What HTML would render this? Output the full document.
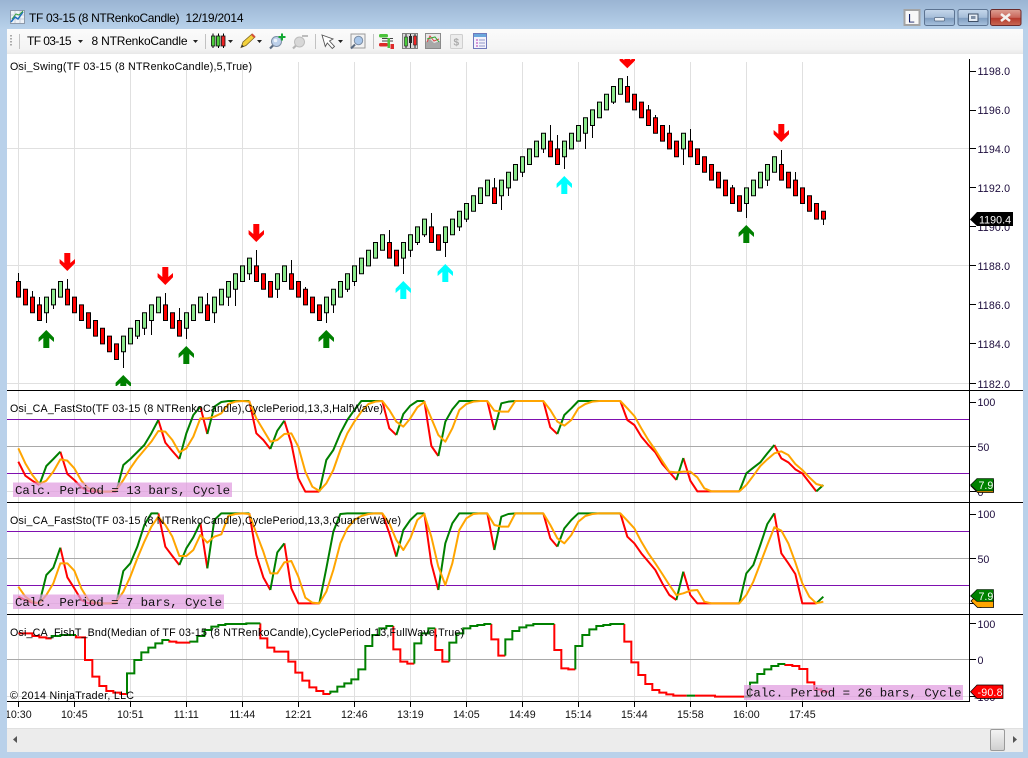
<!DOCTYPE html>
<html><head><meta charset="utf-8"><title>TF 03-15</title>
<style>
html,body{margin:0;padding:0;background:#b9d1ea;width:1028px;height:758px;overflow:hidden}
svg{display:block;position:absolute;left:0;top:0}
text{font-family:"Liberation Sans",sans-serif;font-size:10.67px;fill:#000}
.p{fill:#1c0c3c}
.t{fill:#111;text-anchor:middle}
.m{font-family:"Liberation Mono",monospace;font-size:12.4px;fill:#111}
.w{fill:#fff}
</style></head><body>
<svg width="1028" height="758" viewBox="0 0 1028 758">
<defs>
<linearGradient id="tb" x1="0" y1="0" x2="0" y2="1"><stop offset="0" stop-color="#9ab4d3"/><stop offset="1" stop-color="#b8d1ea"/></linearGradient>
<linearGradient id="tool" x1="0" y1="0" x2="0" y2="1"><stop offset="0" stop-color="#fbfbfb"/><stop offset=".8" stop-color="#f4f4f4"/><stop offset="1" stop-color="#e8e8e8"/></linearGradient>
<linearGradient id="btn" x1="0" y1="0" x2="0" y2="1"><stop offset="0" stop-color="#c6d8ec"/><stop offset=".5" stop-color="#a5bdd8"/><stop offset=".55" stop-color="#7f9dc0"/><stop offset="1" stop-color="#a9c3de"/></linearGradient>
<linearGradient id="cl" x1="0" y1="0" x2="0" y2="1"><stop offset="0" stop-color="#dda093"/><stop offset=".5" stop-color="#c9665a"/><stop offset=".55" stop-color="#b63a2c"/><stop offset="1" stop-color="#c86a54"/></linearGradient>
<linearGradient id="th" x1="0" y1="0" x2="0" y2="1"><stop offset="0" stop-color="#f4f4f4"/><stop offset="1" stop-color="#cfcfcf"/></linearGradient>
<clipPath id="c1"><rect x="7" y="59" width="962" height="327"/></clipPath>
</defs>
<rect width="1028" height="758" fill="#b9d1ea"/>
<rect width="1028" height="29" fill="url(#tb)"/>
<rect x="7" y="29" width="1016" height="25" fill="url(#tool)"/>
<rect x="7" y="54" width="1016" height="674" fill="#fff"/>
<rect x="7" y="728" width="1016" height="24" fill="#ececec"/>
<rect x="7" y="728" width="1016" height="1" fill="#e0e0e0"/>

<!-- grid -->
<path d="M18.5 62V701M74.5 62V701M130.5 62V701M186.5 62V701M242.5 62V701M298.5 62V701M354.5 62V701M410.5 62V701M466.5 62V701M522.5 62V701M578.5 62V701M634.5 62V701M690.5 62V701M746.5 62V701M802.5 62V701" stroke="#e0e0e0" fill="none"/>
<path d="M7 148.5H969M7 265.5H969M7 383.5H969M7 491.5H969M7 603.5H969M7 696.5H969" stroke="#e0e0e0" fill="none"/>
<path d="M7 419.5H969M7 473.5H969M7 531.5H969M7 585.5H969" stroke="#7f10b0" fill="none"/>
<path d="M7 446.5H969M7 558.5H969M7 659.5H969" stroke="#a9a9a9" fill="none"/>

<!-- wicks -->
<path d="M18.5 273V281M32.5 291V297M39.5 297V305M46.5 312V323M53.5 304V309M67.5 279V289M123.5 351V368M137.5 335V339M144.5 328V335M151.5 320V335M165.5 293V305M179.5 308V320M186.5 328V339M207.5 293V305M214.5 312V323M228.5 297V306M235.5 289V306M249.5 273V280M256.5 250V266M277.5 289V298M291.5 260V274M305.5 287V289M326.5 312V323M333.5 305V313M347.5 289V292M354.5 281V286M389.5 230V243M403.5 258V274M410.5 250V257M417.5 242V245M424.5 234V237M431.5 213V227M445.5 242V257M459.5 227V231M466.5 219V222M494.5 178V188M501.5 195V210M508.5 188V196M522.5 172V177M543.5 149V153M550.5 125V141M557.5 135V149M564.5 156V169M585.5 133V149M592.5 125V138M613.5 102V104M627.5 76V87M648.5 105V110M655.5 115V118M669.5 125V133M683.5 149V165M690.5 129V141M732.5 185V188M746.5 203V218M767.5 180V186M781.5 150V165M795.5 172V180M823.5 219V225" stroke="#000" stroke-width="1" fill="none"/>

<!-- green bodies -->
<path fill="#8be88b" stroke="#000" stroke-width="1" d="M44.5 297.1h4v15.6h-4zM51.5 289.3h4v15.6h-4zM58.5 281.5h4v15.6h-4zM121.5 336.1h4v15.6h-4zM128.5 328.3h4v15.6h-4zM135.5 320.5h4v15.6h-4zM142.5 312.7h4v15.6h-4zM149.5 304.9h4v15.6h-4zM156.5 297.1h4v15.6h-4zM184.5 312.7h4v15.6h-4zM191.5 304.9h4v15.6h-4zM198.5 297.1h4v15.6h-4zM212.5 297.1h4v15.6h-4zM219.5 289.3h4v15.6h-4zM226.5 281.5h4v15.6h-4zM233.5 273.7h4v15.6h-4zM240.5 265.9h4v15.6h-4zM247.5 258.1h4v15.6h-4zM275.5 273.7h4v15.6h-4zM282.5 265.9h4v15.6h-4zM324.5 297.1h4v15.6h-4zM331.5 289.3h4v15.6h-4zM338.5 281.5h4v15.6h-4zM345.5 273.7h4v15.6h-4zM352.5 265.9h4v15.6h-4zM359.5 258.1h4v15.6h-4zM366.5 250.3h4v15.6h-4zM373.5 242.5h4v15.6h-4zM380.5 234.7h4v15.6h-4zM401.5 242.5h4v15.6h-4zM408.5 234.7h4v15.6h-4zM415.5 226.9h4v15.6h-4zM422.5 219.1h4v15.6h-4zM443.5 226.9h4v15.6h-4zM450.5 219.1h4v15.6h-4zM457.5 211.3h4v15.6h-4zM464.5 203.5h4v15.6h-4zM471.5 195.7h4v15.6h-4zM478.5 187.9h4v15.6h-4zM485.5 180.1h4v15.6h-4zM499.5 180.1h4v15.6h-4zM506.5 172.3h4v15.6h-4zM513.5 164.5h4v15.6h-4zM520.5 156.7h4v15.6h-4zM527.5 148.9h4v15.6h-4zM534.5 141.1h4v15.6h-4zM541.5 133.3h4v15.6h-4zM562.5 141.1h4v15.6h-4zM569.5 133.3h4v15.6h-4zM576.5 125.5h4v15.6h-4zM583.5 117.7h4v15.6h-4zM590.5 109.9h4v15.6h-4zM597.5 102.1h4v15.6h-4zM604.5 94.3h4v15.6h-4zM611.5 86.5h4v15.6h-4zM618.5 78.7h4v15.6h-4zM681.5 133.3h4v15.6h-4zM744.5 187.9h4v15.6h-4zM751.5 180.1h4v15.6h-4zM758.5 172.3h4v15.6h-4zM765.5 164.5h4v15.6h-4zM772.5 156.7h4v15.6h-4z"/>
<!-- red bodies -->
<path fill="#f00" stroke="#000" stroke-width="1" d="M16.5 281.5h4v15.6h-4zM23.5 289.3h4v15.6h-4zM30.5 297.1h4v15.6h-4zM37.5 304.9h4v15.6h-4zM65.5 289.3h4v15.6h-4zM72.5 297.1h4v15.6h-4zM79.5 304.9h4v15.6h-4zM86.5 312.7h4v15.6h-4zM93.5 320.5h4v15.6h-4zM100.5 328.3h4v15.6h-4zM107.5 336.1h4v15.6h-4zM114.5 343.9h4v15.6h-4zM163.5 304.9h4v15.6h-4zM170.5 312.7h4v15.6h-4zM177.5 320.5h4v15.6h-4zM205.5 304.9h4v15.6h-4zM254.5 265.9h4v15.6h-4zM261.5 273.7h4v15.6h-4zM268.5 281.5h4v15.6h-4zM289.5 273.7h4v15.6h-4zM296.5 281.5h4v15.6h-4zM303.5 289.3h4v15.6h-4zM310.5 297.1h4v15.6h-4zM317.5 304.9h4v15.6h-4zM387.5 242.5h4v15.6h-4zM394.5 250.3h4v15.6h-4zM429.5 226.9h4v15.6h-4zM436.5 234.7h4v15.6h-4zM492.5 187.9h4v15.6h-4zM548.5 141.1h4v15.6h-4zM555.5 148.9h4v15.6h-4zM625.5 86.5h4v15.6h-4zM632.5 94.3h4v15.6h-4zM639.5 102.1h4v15.6h-4zM646.5 109.9h4v15.6h-4zM653.5 117.7h4v15.6h-4zM660.5 125.5h4v15.6h-4zM667.5 133.3h4v15.6h-4zM674.5 141.1h4v15.6h-4zM688.5 141.1h4v15.6h-4zM695.5 148.9h4v15.6h-4zM702.5 156.7h4v15.6h-4zM709.5 164.5h4v15.6h-4zM716.5 172.3h4v15.6h-4zM723.5 180.1h4v15.6h-4zM730.5 187.9h4v15.6h-4zM737.5 195.7h4v15.6h-4zM779.5 164.5h4v15.6h-4zM786.5 172.3h4v15.6h-4zM793.5 180.1h4v15.6h-4zM800.5 187.9h4v15.6h-4zM807.5 195.7h4v15.6h-4zM814.5 203.5h4v15.6h-4zM821.5 211.3h4v7.8h-4z"/>

<!-- arrows -->
<g clip-path="url(#c1)">
<g fill="#008000">
<path d="M46.3 330l7.7 7.7v4.3l-4.7-4v10h-6v-10l-4.7 4v-4.3z"/>
<path d="M186.3 346l7.7 7.7v4.3l-4.7-4v10h-6v-10l-4.7 4v-4.3z"/>
<path d="M326.3 330l7.7 7.7v4.3l-4.7-4v10h-6v-10l-4.7 4v-4.3z"/>
<path d="M123.3 375l7.7 7.7v4.3l-4.7-4v10h-6v-10l-4.7 4v-4.3z"/>
<path d="M746.3 225l7.7 7.7v4.3l-4.7-4v10h-6v-10l-4.7 4v-4.3z"/>
</g>
<g fill="#0ff">
<path d="M403.3 281l7.7 7.7v4.3l-4.7-4v10h-6v-10l-4.7 4v-4.3z"/>
<path d="M445.3 264l7.7 7.7v4.3l-4.7-4v10h-6v-10l-4.7 4v-4.3z"/>
<path d="M564.3 176l7.7 7.7v4.3l-4.7-4v10h-6v-10l-4.7 4v-4.3z"/>
</g>
<g fill="#f00">
<path d="M67.3 271l-7.7-7.7v-4.3l4.7 4v-10h6v10l4.7-4v4.3z"/>
<path d="M165.3 285l-7.7-7.7v-4.3l4.7 4v-10h6v10l4.7-4v4.3z"/>
<path d="M256.3 242l-7.7-7.7v-4.3l4.7 4v-10h6v10l4.7-4v4.3z"/>
<path d="M627.3 68.3l-7.7-7.7v-4.3l4.7 4v-10h6v10l4.7-4v4.3z"/>
<path d="M781.3 142l-7.7-7.7v-4.3l4.7 4v-10h6v10l4.7-4v4.3z"/>
</g>
</g>

<!-- Pane 1 -->
<g transform="translate(0 390) scale(.33333)" fill="none" stroke-width="6" stroke-linejoin="round">
<path stroke="#f00" d="M55 215L76 257 97 272 118 285M181 185L202 252 223 270 244 292 265 303 286 305 349 305M475 90L496 158 517 183 538 207M601 50L622 132M748 33L769 130 790 150 811 177M853 92L874 160 895 265 916 305 958 305M1147 33L1168 115 1189 135M1273 33L1294 168 1315 198M1462 33L1483 120M1630 33L1651 112 1672 132M1861 33L1882 90 1903 105 1924 140 1945 165 1966 187 1987 222 2008 246 2029 270M2050 204L2071 272 2092 304 2218 304M2323 165L2344 205 2365 217 2386 238 2407 250 2428 277 2449 304"/>
<path stroke="#008000" d="M118 285L139 228 160 207 181 185M349 305L370 225 391 207 412 186 433 165 454 130 475 90M538 207L559 130 580 75 601 50M622 132L643 50 664 36 685 33 748 33M811 177L832 122 853 92M958 305L979 210 1000 180 1021 130 1042 90 1063 60 1084 33 1147 33M1189 135L1210 72 1231 47 1252 33 1273 33M1315 198L1336 95 1357 58 1378 33 1462 33M1483 120L1504 40 1525 35 1546 33 1630 33M1672 132L1693 75 1714 55 1735 33 1861 33M2029 270L2050 204M2218 304L2239 250 2260 233 2281 217 2302 190 2323 165M2449 304L2470 285"/>
<path stroke="#ffa500" d="M55 175L76 220 97 255 118 282 139 272 160 245 181 208 202 212 223 235 244 272 265 295 286 300 307 305 328 305 349 300 370 270 391 235 412 205 433 180 454 155 475 123 496 125 517 150 538 187 559 175 580 140 601 85 622 85 643 80 664 70 685 42 706 35 727 33 748 35 769 85 790 120 811 155 832 150 853 132 874 130 895 170 916 245 937 290 958 303 979 280 1000 240 1021 180 1042 130 1063 95 1084 65 1105 42 1126 35 1147 33 1168 60 1189 95 1210 110 1231 85 1252 52 1273 36 1294 85 1315 135 1336 155 1357 115 1378 60 1399 42 1420 35 1441 33 1462 33 1483 62 1504 65 1525 65 1546 33 1630 33 1651 60 1672 95 1693 107 1714 90 1735 55 1756 42 1777 35 1798 33 1861 33 1882 55 1903 78 1924 115 1945 150 1966 180 1987 213 2008 245 2029 247 2050 245 2071 245 2092 262 2113 295 2134 304 2218 304 2239 285 2260 257 2281 228 2302 208 2323 190 2344 184 2365 195 2386 222 2407 240 2428 262 2449 282 2470 288"/>
</g>

<!-- Pane 2 -->
<g transform="translate(0 500) scale(.33333)" fill="none" stroke-width="6" stroke-linejoin="round">
<path stroke="#f00" d="M55 290L76 300 97 308 118 310M181 143L202 232 223 265 244 300 265 310 349 310M475 40L496 140 517 168 538 195M601 68L622 205M748 40L769 165 790 232 811 270M853 130L874 265 895 310 958 310M1147 40L1168 100 1189 170M1273 40L1294 190 1315 270M1462 40L1483 150M1630 40L1651 115 1672 140M1861 40L1882 110 1903 130 1924 160 1945 185 1966 210 1987 250 2008 285 2029 300M2050 215L2071 285 2092 310 2218 310M2323 40L2344 160 2365 190 2386 222 2407 310 2449 310"/>
<path stroke="#008000" d="M118 310L139 225 160 203 181 143M349 310L370 213 391 190 412 140 433 75 454 40 475 40M538 195L559 145 580 112 601 68M622 205L643 60 664 40 748 40M811 270L832 157 853 130M958 310L979 205 1000 95 1021 42 1042 40 1147 40M1189 170L1210 90 1231 60 1252 40 1273 40M1315 270L1336 130 1357 70 1378 40 1462 40M1483 150L1504 50 1525 42 1546 40 1630 40M1672 140L1693 85 1714 60 1735 40 1861 40M2029 300L2050 215M2218 310L2239 220 2260 195 2281 135 2302 72 2323 40M2449 310L2470 290"/>
<path stroke="#ffa500" d="M55 260L76 290 97 305 118 310 139 285 160 250 181 190 202 190 223 212 244 265 265 300 286 308 307 310 328 310 349 305 370 275 391 230 412 175 433 125 454 80 475 50 496 75 517 110 538 168 559 168 580 150 601 105 622 128 643 110 664 103 685 48 706 42 727 40 748 42 769 100 790 155 811 220 832 220 853 187 874 183 895 230 916 293 937 308 958 310 979 275 1000 210 1021 130 1042 85 1063 60 1084 48 1105 42 1126 40 1147 40 1168 70 1189 120 1210 150 1231 115 1252 60 1273 42 1294 110 1315 200 1336 255 1357 190 1378 90 1399 55 1420 42 1441 40 1462 40 1483 75 1504 80 1525 80 1546 40 1630 40 1651 75 1672 115 1693 130 1714 105 1735 65 1756 48 1777 42 1798 40 1861 40 1882 62 1903 85 1924 125 1945 160 1966 190 1987 222 2008 255 2029 285 2050 280 2071 272 2092 270 2113 305 2134 310 2218 310 2239 285 2260 245 2281 190 2302 135 2323 82 2344 92 2365 130 2386 187 2407 250 2428 290 2449 310 2470 305"/>
</g>

<!-- Pane 3 -->
<g transform="translate(0 610) scale(.33333)" fill="none" stroke-width="6">
<path stroke="#f00" d="M55 70H97V78H118V82H139V85H155M228 75V82H255V150H277V200H298V228H319V243H340V248H361V252H381M508 90V95H529V98H571M781 40V85H802V113H823V125H865V155H886V188H907V212H928V232H949V243H970V252H991M1180 48V118H1201V155H1222V161H1243M1306 55V120H1327V155H1348M1474 42V88H1495V137H1516M1663 42V120H1684V175H1705V178H1726M1873 42V95H1894V157H1915V195H1936V222H1957V240H1978V248H1999V253H2020V257H2060M2085 257H2145V260H2233M2356 162V165H2377V168H2398V177H2422V217H2443V238H2464V245H2485"/>
<path stroke="#008000" d="M155 85V78H181V75H228M381 252V190H403V150H424V127H445V113H466V100H487V90H508M571 98V95H592V78H613V60H634V50H655V45H676V42H739V40H781M991 252V245H1012V230H1033V220H1054V208H1075V178H1096V108H1117V75H1138V55H1159V48H1180M1243 161V100H1264V70H1285V55H1306M1348 155V98H1369V70H1390V55H1411V48H1432V45H1453V42H1474M1516 137V88H1537V63H1558V52H1579V46H1600V42H1663M1726 178V108H1747V75H1768V58H1789V48H1810V45H1831V42H1873M2060 257H2085M2233 260H2250V218H2272V192H2293V178H2314V168H2335V162H2356"/>
</g>

<!-- black frame lines -->
<path d="M7 390.5H1023M7 502.5H1023M7 614.5H1023M7 701.5H970M969.5 59V702" stroke="#000" fill="none"/>
<path d="M18.5 701V707M74.5 701V707M130.5 701V707M186.5 701V707M242.5 701V707M298.5 701V707M354.5 701V707M410.5 701V707M466.5 701V707M522.5 701V707M578.5 701V707M634.5 701V707M690.5 701V707M746.5 701V707M802.5 701V707" stroke="#000" fill="none"/>
<path d="M970 71.5H976M970 110.5H976M970 148.5H976M970 187.5H976M970 226.5H976M970 265.5H976M970 304.5H976M970 343.5H976M970 383.5H976M970 402.5H976M970 446.5H976M970 491.5H976M970 514.5H976M970 558.5H976M970 603.5H976M970 623.5H976M970 659.5H976M970 696.5H976" stroke="#000" fill="none"/>

<!-- price labels -->
<text class="p" x="977.5" y="75" textLength="32.5">1198.0</text>
<text class="p" x="977.5" y="114" textLength="32.5">1196.0</text>
<text class="p" x="977.5" y="153" textLength="32.5">1194.0</text>
<text class="p" x="977.5" y="192" textLength="32.5">1192.0</text>
<text class="p" x="977.5" y="231" textLength="32.5">1190.0</text>
<text class="p" x="977.5" y="270" textLength="32.5">1188.0</text>
<text class="p" x="977.5" y="309" textLength="32.5">1186.0</text>
<text class="p" x="977.5" y="348" textLength="32.5">1184.0</text>
<text class="p" x="977.5" y="388" textLength="32.5">1182.0</text>
<text class="p" x="977.5" y="406">100</text>
<text class="p" x="977.5" y="451">50</text>
<text class="p" x="977.5" y="496">0</text>
<text class="p" x="977.5" y="518">100</text>
<text class="p" x="977.5" y="563">50</text>
<text class="p" x="977.5" y="608">0</text>
<text class="p" x="977.5" y="628">100</text>
<text class="p" x="977.5" y="664">0</text>
<text class="p" x="974" y="701">-100</text>

<!-- tags -->
<path d="M970 219.5l7-7.5h36v14h-36z" fill="#000"/>
<text class="w" x="979" y="223.5" textLength="32">1190.4</text>
<path d="M971 486l6.5-6h16v12.500h-16z" fill="#ffa500" stroke="#000" stroke-width=".8"/>
<path d="M970.5 485l6.5-6.5h16.5v12.500h-16.500z" fill="#008000" stroke="#000" stroke-width=".6"/>
<text class="w" x="978.5" y="489">7.9</text>
<path d="M971 601l6.5-6.5h16v13h-16z" fill="#ffa500" stroke="#000" stroke-width=".8"/>
<path d="M970.5 596l6.5-6.5h16.5v12h-16.5z" fill="#008000" stroke="#000" stroke-width=".6"/>
<text class="w" x="978.5" y="600">7.9</text>
<path d="M970.5 691.7l6.5-6.7h26v13.5h-26z" fill="#f00" stroke="#000" stroke-width=".7"/>
<text class="w" x="977.5" y="696" textLength="25">-90.8</text>

<!-- pink labels -->
<rect x="13" y="482.5" width="219" height="14.5" fill="#e098de" fill-opacity=".7"/>
<text class="m" x="15" y="494" textLength="215">Calc. Period = 13 bars, Cycle</text>
<rect x="13" y="594.5" width="211" height="14.5" fill="#e098de" fill-opacity=".7"/>
<text class="m" x="15" y="606" textLength="207">Calc. Period = 7 bars, Cycle</text>
<rect x="744" y="685" width="219" height="15" fill="#e098de" fill-opacity=".7"/>
<text class="m" x="746" y="696.7" textLength="215.5">Calc. Period = 26 bars, Cycle</text>

<!-- legends -->
<text x="10" y="70" textLength="242">Osi_Swing(TF 03-15 (8 NTRenkoCandle),5,True)</text>
<text x="10" y="412" textLength="373">Osi_CA_FastSto(TF 03-15 (8 NTRenkoCandle),CyclePeriod,13,3,HalfWave)</text>
<text x="10" y="524" textLength="391">Osi_CA_FastSto(TF 03-15 (8 NTRenkoCandle),CyclePeriod,13,3,QuarterWave)</text>
<text x="10" y="636" textLength="454">Osi_CA_FishT_Bnd(Median of TF 03-15 (8 NTRenkoCandle),CyclePeriod,13,FullWave,True)</text>
<text x="10" y="699" textLength="124">© 2014 NinjaTrader, LLC</text>

<!-- time labels -->
<text class="t" x="18.3" y="718">10:30</text>
<text class="t" x="74.3" y="718">10:45</text>
<text class="t" x="130.3" y="718">10:51</text>
<text class="t" x="186.3" y="718">11:11</text>
<text class="t" x="242.3" y="718">11:44</text>
<text class="t" x="298.3" y="718">12:21</text>
<text class="t" x="354.3" y="718">12:46</text>
<text class="t" x="410.3" y="718">13:19</text>
<text class="t" x="466.3" y="718">14:05</text>
<text class="t" x="522.3" y="718">14:49</text>
<text class="t" x="578.3" y="718">15:14</text>
<text class="t" x="634.3" y="718">15:44</text>
<text class="t" x="690.3" y="718">15:58</text>
<text class="t" x="746.3" y="718">16:00</text>
<text class="t" x="802.3" y="718">17:45</text>

<!-- borders -->
<rect x="0" y="29" width="7" height="729" fill="#b9d1ea"/>
<rect x="1023" y="29" width="5" height="729" fill="#b9d1ea"/>
<rect x="0" y="752" width="1028" height="6" fill="#b9d1ea"/>

<!-- scrollbar -->
<path d="M17 736v7l-4-3.5z" fill="#555"/>
<path d="M1013 736v7l4-3.5z" fill="#555"/>
<rect x="990.5" y="729.5" width="14" height="21" rx="1.5" fill="url(#th)" stroke="#9a9a9a"/>

<!-- title bar -->
<rect x="10.5" y="10.5" width="14" height="13" fill="#eef2f7" stroke="#8c99aa"/>
<path d="M11 15H24M11 19H24M15 11V23M20 11V23" stroke="#c5cedb" fill="none"/>
<path d="M11 22L15 17 18 19 23 12" stroke="#1f6fc0" stroke-width="1.5" fill="none"/>
<path d="M12 19L16 14 19 15 23 11" stroke="#3aa040" fill="none"/>
<text x="29" y="22" style="font-size:12px" textLength="150.500">TF 03-15 (8 NTRenkoCandle)</text>
<text x="185.500" y="22" style="font-size:12px" textLength="58">12/19/2014</text>

<rect x="904.5" y="10" width="15" height="15" fill="#f8f8f8" stroke="#a3a3a3" stroke-width="2"/>
<text x="908" y="22.5" style="font-size:12px;fill:#12206a">L</text>
<rect x="924.5" y="9.5" width="30" height="16" rx="2" fill="url(#btn)" stroke="#5c7391"/>
<rect x="934.5" y="17.5" width="10" height="3.5" rx="1" fill="#e9eff6" stroke="#52657e" stroke-width=".7"/>
<rect x="958" y="9.5" width="30" height="16" rx="2" fill="url(#btn)" stroke="#5c7391"/>
<rect x="968.5" y="14" width="9.5" height="7.5" fill="#e6edf5" stroke="#3e4f66" stroke-width="1"/>
<rect x="971" y="16" width="4.5" height="3" fill="#7f8fa5"/>
<rect x="990.5" y="9.5" width="30.5" height="16" rx="2" fill="url(#cl)" stroke="#6b2a2a"/>
<path d="M1001 14l9 7M1010 14l-9 7" stroke="#f4f1ee" stroke-width="2.6" fill="none"/>

<!-- toolbar -->
<path d="M11 35v1.5M11 38v1.5M11 41v1.5M11 44v1.5" stroke="#aaa" stroke-width="2" fill="none"/>
<path d="M19.5 34V49M205.5 34V49M315.5 34V49M373.5 34V49" stroke="#c2c2c2" fill="none"/>
<text x="27" y="45" style="font-size:12px" textLength="44.5">TF 03-15</text>
<text x="91.5" y="45" style="font-size:12px" textLength="96">8 NTRenkoCandle</text>
<path d="M78 40h5l-2.5 3zM193 40h5l-2.5 3zM228 40h5l-2.5 3zM257 40h5l-2.5 3zM338 40h5l-2.5 3z" fill="#222"/>
<!-- candles icon -->
<path d="M213 33.5V48M218.5 33.5V48M223.5 33.5V48" stroke="#000" fill="none"/>
<rect x="211.5" y="36" width="3.5" height="10" fill="#4ccc3c" stroke="#111" stroke-width=".8"/>
<rect x="216.5" y="36" width="3.5" height="10" fill="#4ccc3c" stroke="#111" stroke-width=".8"/>
<rect x="221.5" y="36" width="3.5" height="10" fill="#e22" stroke="#111" stroke-width=".8"/>
<!-- pencil -->
<path d="M241 47.5L243 42 252 34 255 37 246 45.5z" fill="#f4d23c" stroke="#7a6420" stroke-width=".8"/>
<path d="M251 35L252.5 33.5 255.5 36.5 254 38z" fill="#d4503c"/>
<path d="M241 47.5l1-3 2 2z" fill="#333"/>
<!-- zoom + -->
<path d="M270 48.5L273.5 45" stroke="#5a6a80" stroke-width="2.2" fill="none"/>
<circle cx="276.5" cy="41.5" r="5" fill="#bcd0ea" stroke="#7d8ea5"/>
<circle cx="275.5" cy="40.5" r="1.8" fill="#eef4fb"/>
<path d="M282 34.5v7M278.5 38h7" stroke="#12a832" stroke-width="2" fill="none" transform="translate(0 -1)"/>
<!-- zoom - -->
<path d="M293 48.5L296.5 45" stroke="#b5b5b5" stroke-width="2.2" fill="none"/>
<circle cx="299.5" cy="42" r="5" fill="#d8d8d8" stroke="#bdbdbd"/>
<path d="M302 36h6" stroke="#bdbdbd" stroke-width="2" fill="none"/>
<!-- cursor -->
<path d="M322 35l11 4-3.5 2 5 5.5-2.2 2-5-5.5-2 3.5z" fill="#fff" stroke="#555" stroke-width=".9"/>
<!-- framed magnifier -->
<rect x="351" y="34" width="14" height="14" fill="#f2f2f2" stroke="#9a9a9a"/>
<circle cx="358.5" cy="40.5" r="4.2" fill="#a9c7ea" stroke="#7d8ea5"/>
<path d="M351 48.5L355 44.5" stroke="#5a6a80" stroke-width="2" fill="none"/>
<!-- bars icon -->
<rect x="379" y="34" width="9" height="3.5" rx="1.5" fill="#4cc33c"/>
<rect x="379" y="43" width="9" height="3.5" rx="1.5" fill="#dd2a2a"/>
<path d="M382 38.5H393M382 41H393" stroke="#444" fill="none"/>
<rect x="387.5" y="38" width="2.5" height="10" fill="#4cc33c"/>
<rect x="390.5" y="44" width="3.5" height="5" fill="#dd2a2a"/>
<!-- candle framed -->
<rect x="402.5" y="33.5" width="15" height="15" fill="#d8d8d8" stroke="#808080"/>
<path d="M406 34V48M410.500 34V48M415 34V48" stroke="#222" fill="none"/>
<rect x="404.500" y="37" width="3" height="9" fill="#47cc3a" stroke="#222" stroke-width=".6"/>
<rect x="409" y="36" width="3" height="7" fill="#222"/>
<rect x="413.500" y="36" width="3" height="9" fill="#e22" stroke="#222" stroke-width=".6"/>
<!-- chart framed -->
<rect x="425.500" y="33.500" width="15" height="15" fill="#e8e8e8" stroke="#8a8a8a"/>
<path d="M426 42L430 39 434 43 440 41V48H426z" fill="#a8a8a8"/>
<path d="M427 42L430 36 434 41 439 39" stroke="#d44" fill="none"/>
<path d="M427 39L431 38 435 37 439 42" stroke="#3a3" fill="none"/>
<!-- disabled $ -->
<rect x="450.500" y="34.500" width="12" height="14" rx="1" fill="#ececec" stroke="#cfcfcf"/>
<text x="453.500" y="45.500" style="font-size:10px;font-weight:bold;fill:#aaa">$</text>
<!-- panel icon -->
<rect x="473.500" y="33.500" width="13" height="15" fill="#f4f2fb" stroke="#6f78bb"/>
<rect x="474" y="34" width="12" height="3" fill="#6aa6dc"/>
<path d="M476 40h2M476 43h2M476 46h2" stroke="#b53ab5" fill="none"/>
<path d="M479 40h6M479 43h6M479 46h6" stroke="#8f98c9" fill="none"/>
</svg>
</body></html>
